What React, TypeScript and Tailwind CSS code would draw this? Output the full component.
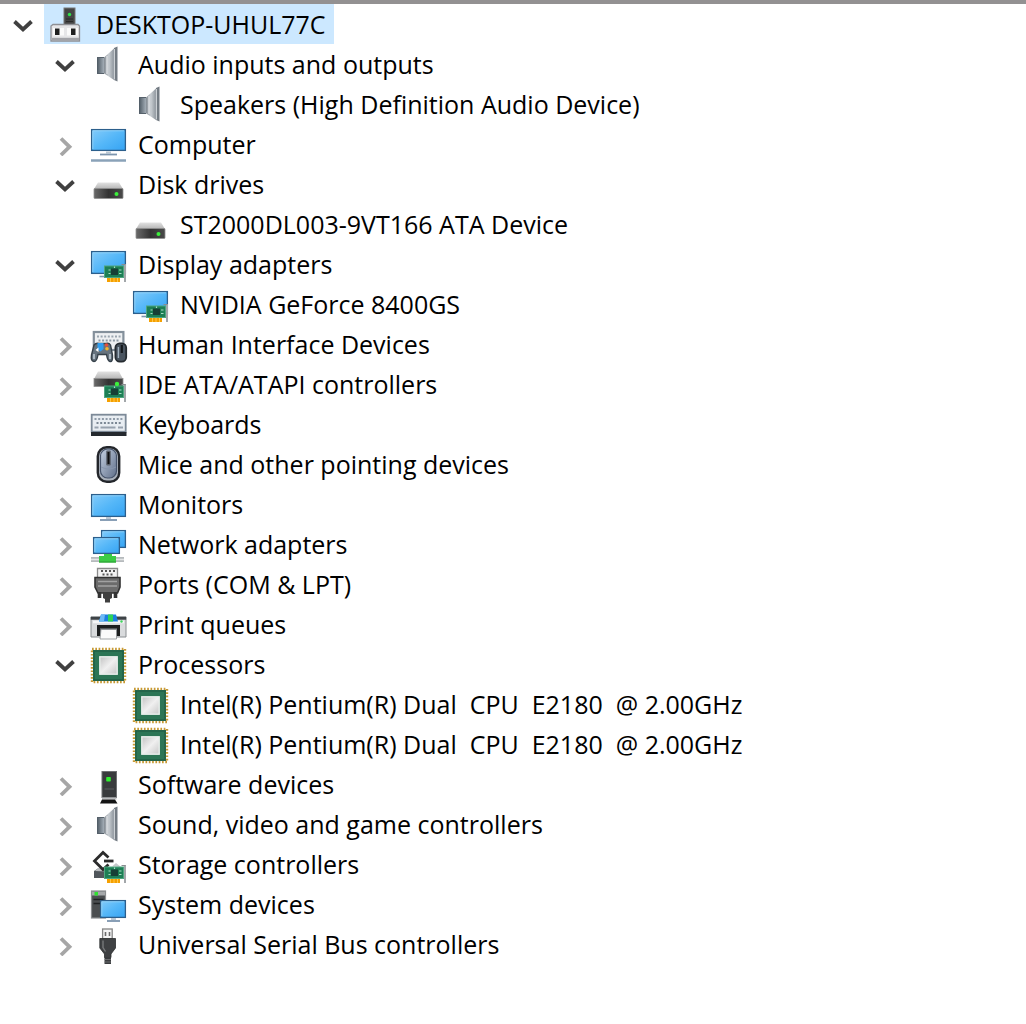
import { useId, useState, type ReactNode } from "react";

type Device = {
  label: string;
  icon: ReactNode;
  open?: boolean;
  children?: Device[];
};

function Icon({ children }: { children: ReactNode }) {
  return (
    <svg viewBox="0 0 36 36" className="h-9 w-9 shrink-0 overflow-visible" aria-hidden="true">
      {children}
    </svg>
  );
}

// Shared gradients, referenced by every icon below
function IconDefs() {
  return (
    <svg className="absolute h-0 w-0" aria-hidden="true">
      <defs>
        <linearGradient id="screen" x1="0" y1="0" x2="1" y2="1">
          <stop offset="0" stopColor="#83cbfa" />
          <stop offset="0.5" stopColor="#55b7f8" />
          <stop offset="1" stopColor="#35a3f3" />
        </linearGradient>
        <linearGradient id="cone" x1="0" y1="0" x2="1" y2="0">
          <stop offset="0" stopColor="#7c848c" />
          <stop offset="0.5" stopColor="#c9ced3" />
          <stop offset="1" stopColor="#8d959c" />
        </linearGradient>
        <linearGradient id="magnet" x1="0" y1="0" x2="1" y2="0">
          <stop offset="0" stopColor="#4d5963" />
          <stop offset="1" stopColor="#a3adb6" />
        </linearGradient>
        <linearGradient id="lid" x1="0" y1="0" x2="0" y2="1">
          <stop offset="0" stopColor="#e2e2e2" />
          <stop offset="1" stopColor="#b4b4b4" />
        </linearGradient>
        <linearGradient id="front" x1="0" y1="0" x2="1" y2="0">
          <stop offset="0" stopColor="#6a6a6a" />
          <stop offset="0.5" stopColor="#333333" />
          <stop offset="1" stopColor="#4a4a4a" />
        </linearGradient>
        <linearGradient id="die" x1="0" y1="0" x2="1" y2="1">
          <stop offset="0" stopColor="#c3c3c3" />
          <stop offset="0.5" stopColor="#f0f0f0" />
          <stop offset="1" stopColor="#c8c8c8" />
        </linearGradient>
        <linearGradient id="shell" x1="0" y1="0" x2="1" y2="1">
          <stop offset="0" stopColor="#c4d0e2" />
          <stop offset="1" stopColor="#5f6e88" />
        </linearGradient>
      </defs>
    </svg>
  );
}

function Screen({ x, y, w, h }: { x: number; y: number; w: number; h: number }) {
  return (
    <>
      <rect x={x + 0.6} y={y + 0.6} width={w - 1.2} height={h - 1.2} fill="url(#screen)" stroke="#2c5f8c" strokeWidth="1.3" />
      <path d={`M${x + 1.8} ${y + h - 2}V${y + 1.8}H${x + w - 2}`} fill="none" stroke="#9bd8fb" strokeWidth="0.8" />
    </>
  );
}

function Card({ y }: { y: number }) {
  return (
    <>
      <rect x="17" y={y + 12} width="13" height="5" fill="#f5a000" />
      <path d={`M20.5 ${y + 12}v5M24 ${y + 12}v5M27.5 ${y + 12}v5`} stroke="#ffc64d" strokeWidth="1" />
      <rect x="14.5" y={y + 1} width="19" height="11.5" fill="#1d7f55" stroke="#4fa680" strokeWidth="1" />
      <rect x="21" y={y + 3.5} width="7" height="6.5" fill="#173f36" />
      <path d={`M18.5 ${y + 5}h2M18.5 ${y + 8.5}h2M29 ${y + 5}h2.5M29 ${y + 8.5}h2.5M24.5 ${y + 1.5}v1.5`} stroke="#a9dcc4" strokeWidth="1.2" />
      <rect x="34" y={y - 1} width="2" height="18" fill="#a3a7aa" />
      <path d={`M31.5 ${y - 0.5}h4`} stroke="#898d90" strokeWidth="1" />
    </>
  );
}

const RootIcon = () => (
  <Icon>
    <rect x="16" y="2" width="11" height="17" fill="#454545" stroke="#777777" strokeWidth="1" />
    <circle cx="21.5" cy="8.5" r="1.7" fill="#2fe04a" />
    <path d="M18 13h7M18 15.5h7" stroke="#2b2b2b" strokeWidth="1" />
    <path d="M5 18.5H30L31.5 20V35H3V20Z" fill="#e6e6e8" stroke="#8f9095" strokeWidth="1.3" />
    <path d="M4 33H31" stroke="#a2a3a8" strokeWidth="2.4" />
    <rect x="5" y="22" width="11" height="7.5" fill="#fafafa" />
    <rect x="19" y="22" width="11" height="7.5" fill="#fafafa" />
    <rect x="7" y="22.5" width="4.5" height="6.5" fill="#1f1f1f" />
    <rect x="23" y="22.5" width="4.5" height="6.5" fill="#1f1f1f" />
  </Icon>
);

const SpeakerIcon = () => (
  <Icon>
    <path d="M13.5 12L24 2.5V34L13.5 27Z" fill="url(#cone)" />
    <rect x="7" y="11" width="7" height="17" fill="url(#magnet)" />
    <path d="M7 11.5h7M7 27.5h7" stroke="#56616b" strokeWidth="1" />
    <path d="M17 10v18" stroke="#eef0f2" strokeWidth="1" />
    <path d="M24 2L27.5 0.5V35.5L24 34Z" fill="#737b83" />
    <path d="M24.4 3V33.5" stroke="#d6dade" strokeWidth="1" />
  </Icon>
);

const ComputerIcon = () => (
  <Icon>
    <Screen x={1} y={3} w={35} h={22} />
    <path d="M16 25.5h5v2h-5z" fill="#b9c6d3" />
    <path d="M10 28.5H27" stroke="#7c95ae" strokeWidth="1.8" />
    <path d="M1 34.5H36" stroke="#8aa2b8" strokeWidth="2.4" />
  </Icon>
);

const DiskIcon = () => (
  <Icon>
    <path d="M8 16.5H29L33 23H4Z" fill="url(#lid)" />
    <rect x="4" y="22.5" width="29" height="10" rx="0.8" fill="url(#front)" stroke="#909090" strokeWidth="0.8" />
    <circle cx="26.5" cy="28" r="2" fill="#3cf03c" />
  </Icon>
);

const DisplayIcon = () => (
  <Icon>
    <Screen x={1} y={5} w={35} h={23} />
    <path d="M9.5 30.5H18" stroke="#7c95ae" strokeWidth="1.6" />
    <Card y={19} />
  </Icon>
);

const HidIcon = () => (
  <Icon>
    <rect x="3.8" y="6" width="29.6" height="18" fill="#eef0f2" stroke="#84909b" strokeWidth="2.2" />
    <path d="M7 10.5H31" stroke="#9aa5af" strokeWidth="2" strokeDasharray="2 1.6" />
    <path d="M8.5 14.5H30" stroke="#8d99a4" strokeWidth="2" strokeDasharray="2 1.6" />
    <path
      d="M4 19Q6 16.5 9 17.5H16Q19 16.5 20.5 19L22.5 29Q23 36 20 35.5Q17.5 35 16.5 28.5H8Q7 35.5 4 35.5Q0.5 35 1.5 29Z"
      fill="#66737e"
      stroke="#36414a"
      strokeWidth="1.4"
    />
    <path d="M4 28v5M20 28v5" stroke="#b4c0ca" strokeWidth="1.8" />
    <path d="M7.5 17h6v6l-3 2.5-3-2.5z" fill="#2f9df0" />
    <path d="M5.5 24l3-2.5v4.5z" fill="#ffffff" />
    <circle cx="16.5" cy="19" r="1.8" fill="#e84e3a" />
    <circle cx="17" cy="22.8" r="1.8" fill="#f4b42c" />
    <rect x="25.4" y="17.4" width="10.8" height="18.2" rx="4.4" fill="#4a5560" stroke="#252b30" strokeWidth="1.8" />
    <path d="M28.4 21v11" stroke="#9fb0be" strokeWidth="1.4" />
    <path d="M31.8 19v8" stroke="#14181b" strokeWidth="2.2" />
  </Icon>
);

const IdeIcon = () => (
  <Icon>
    <path d="M8 5.5H29L33 13H4Z" fill="url(#lid)" />
    <rect x="4" y="12.5" width="29" height="8" fill="url(#front)" stroke="#909090" strokeWidth="0.8" />
    <Card y={19} />
    <circle cx="27" cy="18" r="2.2" fill="#3cf03c" />
  </Icon>
);

const KeyboardIcon = () => (
  <Icon>
    <rect x="1.7" y="8.7" width="34" height="17" fill="#e8edf2" stroke="#7d8a98" strokeWidth="1.8" />
    <path d="M4.5 13H33" stroke="#8f9ba8" strokeWidth="1.8" strokeDasharray="2 1.7" />
    <path d="M6.5 17H31.5" stroke="#7b8794" strokeWidth="1.8" strokeDasharray="2 1.7" />
    <path d="M4.5 21.5h4M10.5 21.5h15M28 21.5h5" stroke="#97a2ae" strokeWidth="1.8" />
    <rect x="1" y="26" width="35.5" height="4" fill="#24292e" />
  </Icon>
);

const MouseIcon = () => (
  <Icon>
    <rect x="7.8" y="1.2" width="21.4" height="34.6" rx="9" fill="#a9b0ba" stroke="#23262b" strokeWidth="2.4" />
    <rect x="10.5" y="3" width="16" height="29" rx="7" fill="url(#shell)" stroke="#46536a" strokeWidth="1.2" />
    <path d="M11 21Q18.5 25 26 21" stroke="#8896ad" strokeWidth="1" fill="none" />
    <rect x="16.2" y="4.5" width="4.6" height="15" rx="1" fill="#5b616b" />
    <path d="M18.5 6v12" stroke="#0e0f11" strokeWidth="2" />
  </Icon>
);

const MonitorIcon = () => (
  <Icon>
    <Screen x={1} y={8} w={35} h={23} />
    <path d="M16 31h5v2h-5z" fill="#b9c6d3" />
    <path d="M10 34H27" stroke="#7c95ae" strokeWidth="1.8" />
  </Icon>
);

const NetworkIcon = () => (
  <Icon>
    <Screen x={11} y={4} w={25} h={18} />
    <Screen x={3} y={11} w={27} h={17} />
    <path d="M1 33.5H9M26 33.5H34" stroke="#b6babd" strokeWidth="5" />
    <path d="M1 33.5H34" stroke="#e3e5e6" strokeWidth="1.4" />
    <path d="M14 28h8v2h4v6.5H9V30h5z" fill="#3ccb45" />
    <path d="M9 36h17" stroke="#289a32" strokeWidth="1" />
  </Icon>
);

const PortIcon = () => (
  <Icon>
    <path d="M7.5 2.5H27.5V12H7.5Z" fill="#f3f3f3" stroke="#8b8b8b" strokeWidth="1.3" />
    <path d="M11 5H26M12.5 8.5H24" stroke="#555555" strokeWidth="1.8" strokeDasharray="2 2" />
    <path d="M5 11.5H30V21L27.5 27H8L5 21Z" fill="#6b6b6b" stroke="#333333" strokeWidth="1.6" />
    <path d="M8 15.5H27M8 20H27" stroke="#a2a2a2" strokeWidth="1.4" />
    <path d="M9.5 26v6M25.5 26v6" stroke="#333333" strokeWidth="3.6" />
    <path d="M13 26.5h9v5.5l-2 1v3.5h-5v-3.5l-2-1z" fill="#3f3f3f" />
  </Icon>
);

const PrinterIcon = () => (
  <Icon>
    <path d="M1 11H36V31H1Z" fill="#d9dbdd" stroke="#8a8e91" strokeWidth="1" />
    <path d="M0.8 12.2H36.2" stroke="#3e4347" strokeWidth="3" />
    <path d="M3 16H34" stroke="#f5f6f7" strokeWidth="2.6" />
    <path d="M11 8.5H26L28 15.5H9Z" fill="#1b7fe0" />
    <path d="M18 8.5h5v7h-5z" fill="#2fd257" />
    <path d="M11 8.5h4l-1 7H9z" fill="#6cb9f5" />
    <path d="M8.5 30V20.5H28.5V30" fill="#55595c" stroke="#1c1e1f" strokeWidth="3" />
    <path d="M11 23.5H26.5V33H10Z" fill="#fafafa" stroke="#8b8f92" strokeWidth="0.8" />
    <circle cx="31.5" cy="15.5" r="1.2" fill="#3fd45c" />
  </Icon>
);

const CpuIcon = () => (
  <Icon>
    <rect x="2" y="3" width="33" height="33" fill="none" stroke="#c79a35" strokeWidth="2.4" strokeDasharray="1.7 1.6" />
    <rect x="3" y="4" width="31" height="31" fill="#2c7555" />
    <rect x="4" y="5" width="29" height="29" fill="none" stroke="#225f46" strokeWidth="1.4" />
    <rect x="9.8" y="10.8" width="17.4" height="17.4" fill="url(#die)" stroke="#e9efec" strokeWidth="1.4" />
  </Icon>
);

const SoftwareIcon = () => (
  <Icon>
    <rect x="12" y="5.5" width="14.5" height="26" fill="#393b3d" stroke="#6f7173" strokeWidth="1" />
    <path d="M14.5 23H24" stroke="#5a5c5e" strokeWidth="1" />
    <rect x="16.2" y="11" width="4.6" height="4.6" rx="0.8" fill="#2ff02f" />
    <path d="M12 31.5h14.5v2H12z" fill="#b9bbbd" />
    <path d="M12 33.5H25L27.5 37.5H10Z" fill="#141414" />
  </Icon>
);

const StorageIcon = () => (
  <Icon>
    <path d="M4 25L8 22.5H16V32H4Z" fill="#50565b" />
    <path d="M5 25L8 22H17V25.5Z" fill="#babdbf" />
    <path d="M18.5 11.5L13 6.5L4.5 15L13 23.5L18.5 18.5" fill="#ffffff" stroke="#2b2b2b" strokeWidth="2.8" />
    <path d="M14 15H23.5" stroke="#2b2b2b" strokeWidth="2.8" />
    <path d="M22 20.5L26 17L31 21Z" fill="#c5c8ca" />
    <Card y={20} />
  </Icon>
);

const SystemIcon = () => (
  <Icon>
    <rect x="1.5" y="5" width="14" height="27" fill="#4b4e50" stroke="#8b8e90" strokeWidth="1.2" />
    <path d="M2 7.5h13" stroke="#a5a8aa" strokeWidth="4" />
    <rect x="4.5" y="6" width="3.5" height="3.5" fill="#2fe02f" />
    <path d="M3.5 13.5h10M3.5 17.5h10" stroke="#1f2122" strokeWidth="1.6" />
    <Screen x={10} y={14} w={26} h={18} />
    <path d="M21 32h5v2h-5z" fill="#b9c6d3" />
    <path d="M17 35H30" stroke="#7c95ae" strokeWidth="1.8" />
  </Icon>
);

const UsbIcon = () => (
  <Icon>
    <rect x="12.6" y="3" width="9.6" height="10" fill="#f4f4f4" stroke="#868686" strokeWidth="1.3" />
    <path d="M15.5 6v4M19.5 6v4" stroke="#6a6a6a" strokeWidth="1.6" />
    <path d="M9.8 12.5H25.5V22L21 28V31.5H14.5V28L9.8 22Z" fill="#3f4143" stroke="#2c2e2f" strokeWidth="0.8" />
    <path d="M13 14.5v7l2.5 4" stroke="#77797b" strokeWidth="1.4" fill="none" />
    <path d="M14.5 31h6.5v7h-6.5z" fill="#3a3c3e" />
    <path d="M14.5 33.5h6.5M14.5 36h6.5" stroke="#77797b" strokeWidth="0.8" />
  </Icon>
);

const devices: Device[] = [
  {
    label: "Audio inputs and outputs",
    icon: <SpeakerIcon />,
    open: true,
    children: [{ label: "Speakers (High Definition Audio Device)", icon: <SpeakerIcon /> }],
  },
  { label: "Computer", icon: <ComputerIcon />, children: [] },
  {
    label: "Disk drives",
    icon: <DiskIcon />,
    open: true,
    children: [{ label: "ST2000DL003-9VT166 ATA Device", icon: <DiskIcon /> }],
  },
  {
    label: "Display adapters",
    icon: <DisplayIcon />,
    open: true,
    children: [{ label: "NVIDIA GeForce 8400GS", icon: <DisplayIcon /> }],
  },
  { label: "Human Interface Devices", icon: <HidIcon />, children: [] },
  { label: "IDE ATA/ATAPI controllers", icon: <IdeIcon />, children: [] },
  { label: "Keyboards", icon: <KeyboardIcon />, children: [] },
  { label: "Mice and other pointing devices", icon: <MouseIcon />, children: [] },
  { label: "Monitors", icon: <MonitorIcon />, children: [] },
  { label: "Network adapters", icon: <NetworkIcon />, children: [] },
  { label: "Ports (COM & LPT)", icon: <PortIcon />, children: [] },
  { label: "Print queues", icon: <PrinterIcon />, children: [] },
  {
    label: "Processors",
    icon: <CpuIcon />,
    open: true,
    children: [
      { label: "Intel(R) Pentium(R) Dual  CPU  E2180  @ 2.00GHz", icon: <CpuIcon /> },
      { label: "Intel(R) Pentium(R) Dual  CPU  E2180  @ 2.00GHz", icon: <CpuIcon /> },
    ],
  },
  { label: "Software devices", icon: <SoftwareIcon />, children: [] },
  { label: "Sound, video and game controllers", icon: <SpeakerIcon />, children: [] },
  { label: "Storage controllers", icon: <StorageIcon />, children: [] },
  { label: "System devices", icon: <SystemIcon />, children: [] },
  { label: "Universal Serial Bus controllers", icon: <UsbIcon />, children: [] },
];

function Chevron({ open }: { open: boolean }) {
  return (
    <svg viewBox="0 0 24 24" className="h-6 w-6" fill="none" strokeWidth="3.8" aria-hidden="true">
      {open ? (
        <path d="M3.5 9.5L12 17.5L20.5 9.5" stroke="#404040" />
      ) : (
        <path d="M8 6.5L16.5 14.8L8 23" stroke="#a6a6a6" />
      )}
    </svg>
  );
}

function TreeNode({ device, root = false }: { device: Device; root?: boolean }) {
  const [open, setOpen] = useState(device.open ?? false);
  const labelId = useId();

  return (
    <li>
      <div className="flex h-10 items-center">
        {device.children ? (
          <button
            type="button"
            className="flex h-full w-[42px] shrink-0 items-center justify-center"
            aria-expanded={open}
            aria-labelledby={labelId}
            onClick={() => setOpen(!open)}
          >
            <Chevron open={open} />
          </button>
        ) : (
          <span className="w-[42px] shrink-0" />
        )}
        <div className={root ? "flex h-full items-center gap-3 bg-[#cce8ff] pr-2 pl-1" : "flex h-full items-center gap-3 pr-2 pl-1"}>
          {device.icon}
          <span id={labelId} className="whitespace-pre">
            {device.label}
          </span>
        </div>
      </div>
      {open && device.children && device.children.length > 0 && (
        <ul className="pl-[42px]">
          {device.children.map((child, i) => (
            <TreeNode key={i} device={child} />
          ))}
        </ul>
      )}
    </li>
  );
}

export default function App() {
  return (
    <main className="min-h-screen border-t-4 border-[#939192] bg-white pl-0.5 font-['Open_Sans','Noto_Sans',sans-serif] text-[25px] leading-8 text-black">
      <IconDefs />
      <ul>
        <TreeNode root device={{ label: "DESKTOP-UHUL77C", icon: <RootIcon />, open: true, children: devices }} />
      </ul>
    </main>
  );
}
